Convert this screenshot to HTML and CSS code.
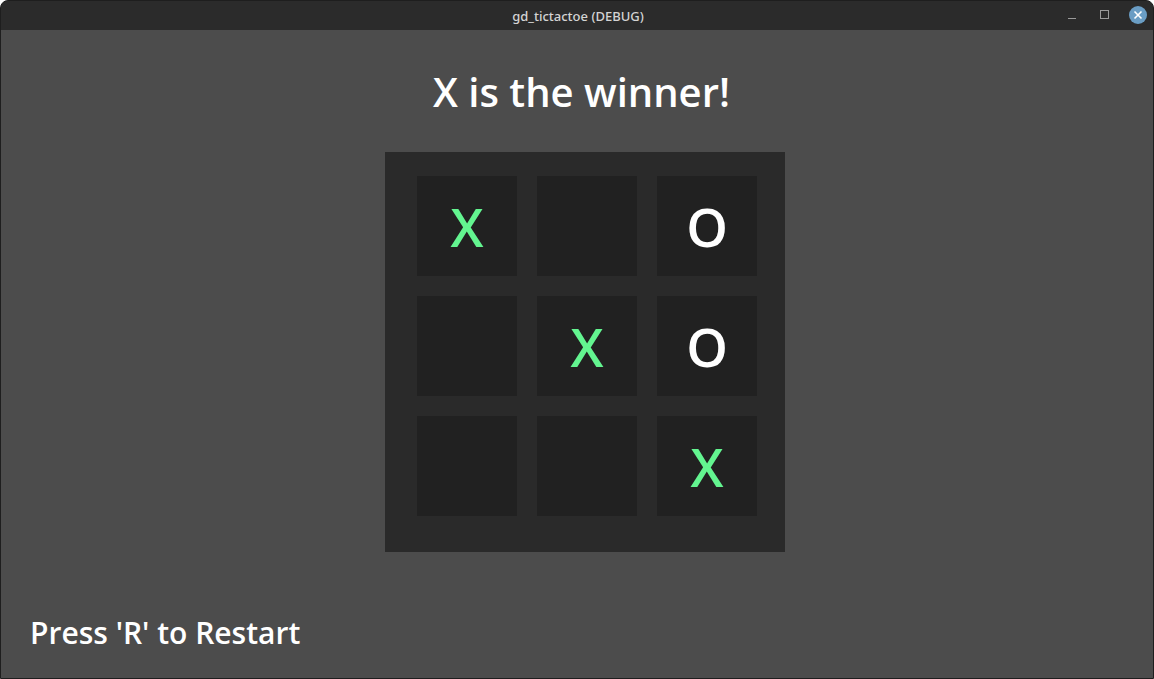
FILE: index.html
```html
<!DOCTYPE html>
<html>
<head>
<meta charset="utf-8">
<link rel="stylesheet" href="styles.css">
</head>
<body>
<div class="window">
  <div class="titlebar">
    <div class="title">gd_tictactoe (DEBUG)</div>
    <div class="controls">
      <svg class="ctl" width="14" height="14" viewBox="0 0 14 14"><path d="M3 10.5h8" stroke="#9a9a9a" stroke-width="1"/></svg>
      <svg class="ctl" width="14" height="14" viewBox="0 0 14 14"><rect x="3.5" y="2.5" width="8" height="8" fill="none" stroke="#9a9a9a" stroke-width="1"/></svg>
      <svg class="close" width="18" height="18" viewBox="0 0 18 18"><circle cx="9" cy="9" r="9" fill="#6a9dc4"/><path d="M5.5 5.5l7 7M12.5 5.5l-7 7" stroke="#fff" stroke-width="1.6"/></svg>
    </div>
  </div>
  <div class="content">
    <h1 class="status">X is the winner!</h1>
    <div class="board">
      <div class="cell x">X</div>
      <div class="cell"></div>
      <div class="cell o">O</div>
      <div class="cell"></div>
      <div class="cell x">X</div>
      <div class="cell o">O</div>
      <div class="cell"></div>
      <div class="cell"></div>
      <div class="cell x">X</div>
    </div>
    <div class="footer">Press 'R' to Restart</div>
  </div>
</div>
</body>
</html>
```
FILE: styles.css
```css
html, body {
  margin: 0;
  padding: 0;
  background: #ffffff;
}
body {
  width: 1154px;
  height: 679px;
  overflow: hidden;
}
.window {
  box-sizing: border-box;
  width: 1154px;
  height: 679px;
  background: #2b2b2b;
  border: 1px solid #1e1e1e;
  border-radius: 8px 8px 0 0;
  display: flex;
  flex-direction: column;
  overflow: hidden;
}
.titlebar {
  height: 29px;
  flex: none;
  display: flex;
  align-items: center;
  justify-content: center;
  position: relative;
  background: #2b2b2b;
}
.title {
  font-family: "Noto Sans", "DejaVu Sans", sans-serif;
  font-size: 13px;
  font-weight: 500;
  color: #d4d4d4;
  margin-left: 2px;
}
.controls {
  position: absolute;
  right: 6px;
  top: 5px;
  display: flex;
  align-items: center;
  gap: 18px;
}
.ctl { display: block; }
.close { display: block; }
.content {
  flex: 1;
  background: #4c4c4c;
  display: flex;
  flex-direction: column;
  align-items: center;
}
.status {
  margin: 35px 0 0 9px;
  height: 54px;
  font-family: "Open Sans", "Noto Sans", sans-serif;
  font-weight: 600;
  font-size: 40px;
  line-height: 54px;
  color: #ffffff;
}
.board {
  margin: 33px 0 0 16px;
  box-sizing: border-box;
  width: 400px;
  height: 400px;
  padding: 24px 28px 36px 32px;
  background: #2a2a2a;
  display: grid;
  grid-template-columns: repeat(3, 100px);
  grid-template-rows: repeat(3, 100px);
  gap: 20px;
}
.cell {
  background: #212121;
  display: flex;
  align-items: center;
  justify-content: center;
  font-family: "Open Sans", "Noto Sans", sans-serif;
  font-weight: 600;
  font-size: 53px;
  line-height: normal;
}
.cell.x { color: #63f590; }
.cell.o { color: #ffffff; }
.footer {
  margin-top: auto;
  align-self: flex-start;
  padding: 0 0 25px 29px;
  font-family: "Open Sans", "Noto Sans", sans-serif;
  font-weight: 600;
  font-size: 30px;
  line-height: normal;
  color: #ffffff;
}
```
